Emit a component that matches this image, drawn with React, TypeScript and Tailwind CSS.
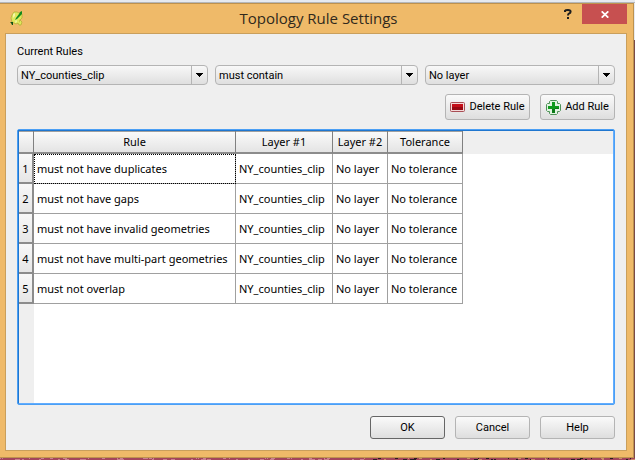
import type { ReactNode } from "react";

const rules = [
  "must not have duplicates",
  "must not have gaps",
  "must not have invalid geometries",
  "must not have multi-part geometries",
  "must not overlap",
];

const speckles = Array.from({ length: 110 }, (_, i) => ({
  x: (i * 67 + ((i * i * 13) % 41)) % 635,
  w: 1 + ((i * 7) % 4),
  y: i % 2,
}));

function QgisIcon() {
  return (
    <svg width="14" height="15" viewBox="0 0 14 15" aria-hidden="true">
      <path d="M4 1h3l2 1 3 1v4l-2 2 2 2-1 3H9l-1-2-2 1-4-2-1-4 1-3z" fill="#dfe85c" stroke="#a3a52e" strokeWidth="0.6" />
      <path d="M3 3l2-1v3L3 7zM6 8l1 3-2 1z" fill="#f5f7a8" />
      <path d="M9 8l1 2-1 2z" fill="#b9bf3e" />
      <path d="M12 0v3L7 8 5 9l1-2 3-4 1-2z" fill="#138a1c" />
      <path d="M0 11h3v3H2l-1-2z" fill="#0d5314" />
    </svg>
  );
}

function MinusIcon() {
  return (
    <svg width="15" height="10" viewBox="0 0 15 10" aria-hidden="true">
      <rect x="0.5" y="0.5" width="14" height="9" rx="1" fill="#f4d9d9" stroke="#a84e55" />
      <rect x="2" y="2" width="11" height="6" fill="#c40d18" />
      <rect x="2" y="5" width="11" height="3" fill="#980812" />
    </svg>
  );
}

function PlusIcon() {
  return (
    <svg width="15" height="15" viewBox="0 0 15 15" aria-hidden="true">
      <path d="M3.500 1.500l1-1h6l1 1v2h2l1 1v6l-1 1h-2v2l-1 1h-6l-1-1v-2h-2l-1-1v-6l1-1h2z" fill="#e2f3e2" stroke="#4f9258" />
      <path d="M6 2h3v4h4v3H9v4H6V9H2V6h4z" fill="#0f9a1c" />
      <path d="M9 9h4V8H9zM6 9h3v4H6z" fill="#0a7a16" />
    </svg>
  );
}

function Combo({ label, value, options }: { label: string; value: string; options: string[] }) {
  return (
    <div className="relative">
      <select
        aria-label={label}
        defaultValue={value}
        className="block h-5 w-full appearance-none rounded-sm border border-[#b4b4b4] bg-linear-to-b from-[#f8f8f8] to-[#dfdfdf] pt-px pr-5 pl-[3px] text-[11px] leading-4 text-black"
      >
        {options.map((o) => (
          <option key={o}>{o}</option>
        ))}
      </select>
      <span className="pointer-events-none absolute inset-y-px right-px flex w-4 items-center justify-center border-l border-[#b4b4b4]">
        <svg width="7" height="4" viewBox="0 0 7 4" shapeRendering="crispEdges" aria-hidden="true">
          <path d="M0 0h7v1H6v1H5v1H4v1H3V3H2V2H1V1H0z" fill="#000" />
        </svg>
      </span>
    </div>
  );
}

function Button({ children, className }: { children: ReactNode; className: string }) {
  return (
    <button
      type="button"
      className={`flex items-center justify-center rounded-[3px] border bg-linear-to-b from-[#fafafa] to-[#dedede] text-[11px] leading-4 text-black ${className}`}
    >
      {children}
    </button>
  );
}

const headCell =
  "border-r border-b-2 border-r-[#808080] border-b-[#8c8c8c] bg-linear-to-b from-[#fbfbfb] to-[#e4e4e4] px-0 pt-px pb-0 font-normal shadow-[inset_0_1px_0_#a0a0a0]";
const bodyCell = "border-r border-b border-[#a0a0a0] bg-white px-[3px] pt-px pb-0 whitespace-nowrap";

export default function App() {
  return (
    <div className="relative flex min-h-screen flex-col bg-[linear-gradient(#e6eaf0_40px,#7a4a48_40px)] pr-px pb-[2px] font-['Roboto','Noto_Sans',sans-serif] text-black">
      <svg className="absolute bottom-0 left-0 h-[2px] w-full" viewBox="0 0 635 2" preserveAspectRatio="none" aria-hidden="true">
        <rect width="635" height="2" fill="#a3455c" />
        {speckles.map((s, i) => (
          <rect
            key={i}
            x={s.x}
            y={s.y}
            width={s.w}
            height="1"
            fill={s.x > 360 ? (i % 3 ? "#2c1c24" : "#c98b68") : "#c9808f"}
          />
        ))}
      </svg>
      <div className="-mr-px h-[3px] border-b border-[#b4b7bb] bg-[#e6eaf0]" />
      <main className="flex flex-1 flex-col border border-l-0 border-[#bd924f] bg-[#efba69] pr-[6px] pb-[6px] pl-[5px]">
        <header className="flex h-[29px] items-start">
          <div className="flex flex-1 pt-[7px] pl-[5px]">
            <QgisIcon />
          </div>
          <h1 className="pt-1 font-['Open_Sans','Noto_Sans',sans-serif] text-[15px] leading-5 text-[#30291c]">
            Topology Rule Settings
          </h1>
          <div className="flex flex-1 justify-end">
            <button type="button" aria-label="What's this?" className="mr-[2px] flex h-5 w-6 items-center justify-center">
              <svg width="8" height="10" viewBox="0 0 8 10" aria-hidden="true">
                <path d="M1 3V1.8Q1.5 1 4 1q2.6 0 2.6 1.8Q6.600 4 4.900 4.600Q4 5 4 6.500" fill="none" stroke="#1e1e1e" strokeWidth="2" />
                <path d="M3 8h2v2H3z" fill="#1e1e1e" />
              </svg>
            </button>
            <button type="button" aria-label="Close" className="flex h-5 w-[45px] items-center justify-center bg-[#c75050]">
              <svg width="8" height="7" viewBox="0 0 8 7" aria-hidden="true">
                <path d="M.7.3l6.600 6.400M7.300.3L.7 6.700" stroke="#fff" strokeWidth="1.700" />
              </svg>
            </button>
          </div>
        </header>

        <div className="flex flex-1 flex-col border border-[#c99f5c] bg-[#efefef] px-[11px] pt-[10px] pb-[11px]">
          <h2 className="text-[11px] leading-4">Current Rules</h2>
          <div className="mt-[5px] grid grid-cols-[191fr_203fr_190fr] gap-[7px]">
            <Combo label="First layer" value="NY_counties_clip" options={["NY_counties_clip", "No layer"]} />
            <Combo label="Rule" value="must contain" options={["must contain", ...rules]} />
            <Combo label="Second layer" value="No layer" options={["No layer", "NY_counties_clip"]} />
          </div>
          <div className="mt-[9px] flex justify-end gap-[10px]">
            <Button className="h-[26px] w-[85px] gap-1 border-[#b4b4b4]">
              <MinusIcon />
              Delete Rule
            </Button>
            <Button className="h-[26px] w-[75px] gap-1 border-[#b4b4b4]">
              <PlusIcon />
              Add Rule
            </Button>
          </div>

          <div className="mt-[9px] flex flex-1 rounded-[2px] border border-[#4b9ff4]">
            <div className="flex-1 border border-t-[#1f76cf] border-r-[#62adff] border-b-[#62adff] border-l-[#1f76cf] bg-[linear-gradient(#efefef,#efefef),linear-gradient(#efefef,#efefef)] bg-white bg-[length:100%_23px,15px_100%] bg-no-repeat">
              <table className="w-[444px] table-fixed border-separate border-spacing-0 font-['Noto_Sans','Open_Sans',sans-serif] text-[11px] leading-4">
                <colgroup>
                  <col className="w-[15px]" />
                  <col />
                  <col className="w-[97px]" />
                  <col className="w-[55px]" />
                  <col className="w-[75px]" />
                </colgroup>
                <thead>
                  <tr className="h-[23px]">
                    <td className={headCell} />
                    <th scope="col" className={headCell}>Rule</th>
                    <th scope="col" className={headCell}>Layer #1</th>
                    <th scope="col" className={headCell}>Layer #2</th>
                    <th scope="col" className={headCell}>Tolerance</th>
                  </tr>
                </thead>
                <tbody>
                  {rules.map((rule, i) => (
                    <tr key={rule} className="h-[30px]">
                      <th
                        scope="row"
                        className="border-r-2 border-b-2 border-[#8c8c8c] bg-linear-to-b from-[#f8f8f8] to-[#e6e6e6] px-0 pt-px pb-0 font-normal"
                      >
                        {i + 1}
                      </th>
                      <td className={`${bodyCell} ${i === 0 ? "outline-1 -outline-offset-1 outline-dotted outline-black" : ""}`}>
                        {rule}
                      </td>
                      <td className={bodyCell}>NY_counties_clip</td>
                      <td className={bodyCell}>No layer</td>
                      <td className={bodyCell}>No tolerance</td>
                    </tr>
                  ))}
                </tbody>
              </table>
            </div>
          </div>

          <footer className="mt-[11px] flex justify-end gap-[10px]">
            <Button className="h-[23px] w-[75px] border-[#666]">OK</Button>
            <Button className="h-[23px] w-[75px] border-[#b4b4b4]">Cancel</Button>
            <Button className="h-[23px] w-[75px] border-[#b4b4b4]">Help</Button>
          </footer>
        </div>
      </main>
    </div>
  );
}
